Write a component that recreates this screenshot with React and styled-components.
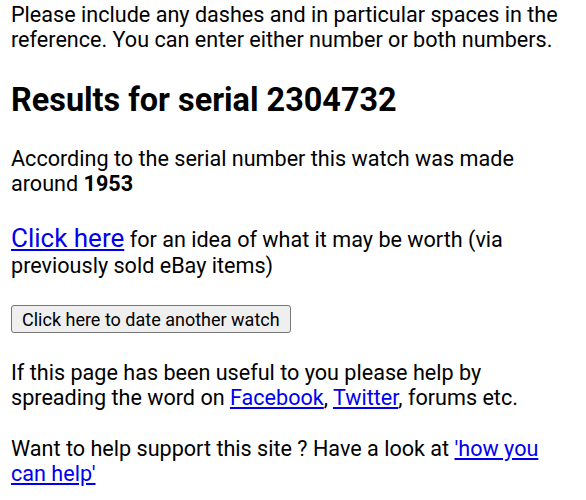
import React from 'react';
import styled, { createGlobalStyle } from 'styled-components';

const Global = createGlobalStyle`
body {
  margin: 0;
  background: #fff;
  font-family: Roboto, 'Liberation Sans', sans-serif;
  color: #000;
}
`

const Page = styled.div`
padding: 2px 11px 0 11px;
font-size: 21.6px;
line-height: normal;
`

const Para = styled.p`
margin: 0 0 ${props => props.tight ? '25.5px' : '26.5px'} 0;
`

const Heading = styled.h2`
font-size: 32.4px;
font-weight: 700;
margin: 29px 0 27px 0;
`

const Link = styled.a`
color: #0000ee;
text-decoration: underline;
font-size: ${props => props.big ? '26px' : 'inherit'};
`

const Button = styled.button`
font-family: Roboto, 'Liberation Sans', sans-serif;
font-size: 18px;
padding: 2px 10px;
height: 28px;
background: #efefef;
border: 1px solid #767676;
border-radius: 3px;
color: #000;
margin: 1px 0 27px 0;
`

const App = () => {
    return (
    <Page>
        <Global />
        <Para>Please include any dashes and in particular spaces in the reference. You can enter either number or both numbers.</Para>
        <Heading>Results for serial 2304732</Heading>
        <Para>According to the serial number this watch was made around <b>1953</b></Para>
        <Para><Link big href="#">Click here</Link> for an idea of what it may be worth (via previously sold eBay items)</Para>
        <Button>Click here to date another watch</Button>
        <Para tight>If this page has been useful to you please help by spreading the word on <Link href="#">Facebook</Link>, <Link href="#">Twitter</Link>, forums etc.</Para>
        <Para>Want to help support this site ? Have a look at <Link href="#">'how you can help'</Link></Para>
    </Page>
    );
};

export default App;
